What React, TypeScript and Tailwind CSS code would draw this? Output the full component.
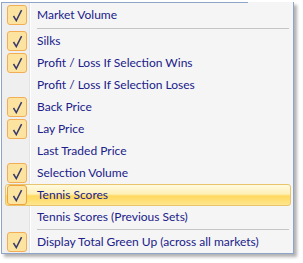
const ITEMS: ({ sep: true } | { label: string; checked: boolean; hot?: boolean })[] = [
  { label: "Market Volume", checked: true },
  { sep: true },
  { label: "Silks", checked: true },
  { label: "Profit / Loss If Selection Wins", checked: true },
  { label: "Profit / Loss If Selection Loses", checked: false },
  { label: "Back Price", checked: true },
  { label: "Lay Price", checked: true },
  { label: "Last Traded Price", checked: false },
  { label: "Selection Volume", checked: true },
  { label: "Tennis Scores", checked: true, hot: true },
  { label: "Tennis Scores (Previous Sets)", checked: false },
  { sep: true },
  { label: "Display Total Green Up (across all markets)", checked: true },
];

function Check({ hot }: { hot?: boolean }) {
  return (
    <div
      className={
        "w-[20px] h-[20px] shrink-0 rounded-[3px] border flex items-center justify-center " +
        (hot ? "border-[#f0a23c] bg-[#fde4a0]" : "border-[#f3ad55] bg-[#fde3a0]")
      }
    >
      <svg width="11" height="13" viewBox="0 0 11 13">
        <path d="M1.5 7 L4.3 11.6 L9.6 1.2" fill="none" stroke="#363a6c" strokeWidth="1.5" />
      </svg>
    </div>
  );
}

export default function App() {
  let sepCount = 0;
  return (
    <div className="w-[303px] h-[263px] bg-white pl-px pt-[2px]" style={{ fontFamily: 'Lato, "Noto Sans", sans-serif' }}>
      <div className="w-[293px] h-[252px] flex flex-col border-x border-b border-[#8ea5c9] bg-[#f5f5f5] shadow-[3px_3px_3px_rgba(0,0,0,0.3)]">
        <div className="flex h-px">
          <div className="w-[246px] bg-[#8ea5c9]" />
        </div>
        <div className="flex-1 flex flex-col pt-px bg-[linear-gradient(to_right,#efefef_0,#efefef_27px,#e2e3e3_27px,#e2e3e3_28px,#ffffff_28px,#ffffff_29px,#f5f5f5_29px)]">
          {ITEMS.map((it, i) => {
            if ("sep" in it) {
              sepCount++;
              return (
                <div key={i} className={sepCount === 1 ? "h-[4px] pt-[2px] pl-[35px] pr-[4px]" : "h-[3px] pt-px pl-[35px] pr-[4px]"}>
                  <div className="h-px bg-[#c5c5c5]" />
                </div>
              );
            }
            return (
              <div
                key={i}
                className={
                  "h-[22px] ml-[3px] mr-[2px] flex items-center pl-px rounded-[3px] border " +
                  (it.hot
                    ? "border-[#e9c46f] bg-[linear-gradient(to_bottom,#fffae0_0%,#fff0b8_45%,#ffd95f_55%,#ffe68e_100%)]"
                    : "border-transparent")
                }
              >
                <div className="w-[20px] shrink-0">{it.checked && <Check hot={it.hot} />}</div>
                <span className="pl-[10px] text-[12px] text-[#20208a] whitespace-nowrap leading-none">{it.label}</span>
              </div>
            );
          })}
        </div>
      </div>
    </div>
  );
}
